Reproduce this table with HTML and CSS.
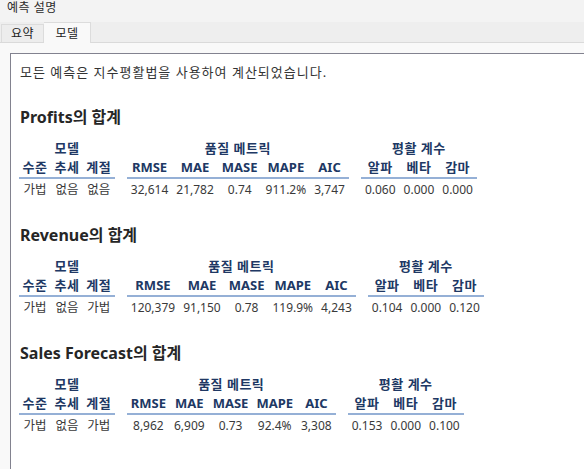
FILE: index.html
```html
<!DOCTYPE html>
<html lang="ko">
<head>
<meta charset="utf-8">
<title>예측 설명</title>
<link rel="stylesheet" href="styles.css">
</head>
<body>
<div class="title">예측 설명</div>
<div class="tabs">
  <div class="tab">요약</div>
  <div class="tab active">모델</div>
</div>
<div class="panel">
  <div class="content">
    <p class="intro">모든 예측은 지수평활법을 사용하여 계산되었습니다.</p>

    <section class="summary">
      <h2>Profits의 합계</h2>
      <div class="groups">
        <table class="grp model">
          <thead>
            <tr><th colspan="3" class="gh">모델</th></tr>
            <tr class="ch"><th>수준</th><th>추세</th><th>계절</th></tr>
          </thead>
          <tbody><tr><td>가법</td><td>없음</td><td>없음</td></tr></tbody>
        </table>
        <table class="grp">
          <thead>
            <tr><th colspan="5" class="gh">품질 메트릭</th></tr>
            <tr class="ch"><th>RMSE</th><th>MAE</th><th>MASE</th><th>MAPE</th><th>AIC</th></tr>
          </thead>
          <tbody><tr><td>32,614</td><td>21,782</td><td>0.74</td><td>911.2%</td><td>3,747</td></tr></tbody>
        </table>
        <table class="grp smooth">
          <thead>
            <tr><th colspan="3" class="gh">평활 계수</th></tr>
            <tr class="ch"><th>알파</th><th>베타</th><th>감마</th></tr>
          </thead>
          <tbody><tr><td>0.060</td><td>0.000</td><td>0.000</td></tr></tbody>
        </table>
      </div>
    </section>

    <section class="summary">
      <h2>Revenue의 합계</h2>
      <div class="groups">
        <table class="grp model">
          <thead>
            <tr><th colspan="3" class="gh">모델</th></tr>
            <tr class="ch"><th>수준</th><th>추세</th><th>계절</th></tr>
          </thead>
          <tbody><tr><td>가법</td><td>없음</td><td>가법</td></tr></tbody>
        </table>
        <table class="grp">
          <thead>
            <tr><th colspan="5" class="gh">품질 메트릭</th></tr>
            <tr class="ch"><th>RMSE</th><th>MAE</th><th>MASE</th><th>MAPE</th><th>AIC</th></tr>
          </thead>
          <tbody><tr><td>120,379</td><td>91,150</td><td>0.78</td><td>119.9%</td><td>4,243</td></tr></tbody>
        </table>
        <table class="grp smooth">
          <thead>
            <tr><th colspan="3" class="gh">평활 계수</th></tr>
            <tr class="ch"><th>알파</th><th>베타</th><th>감마</th></tr>
          </thead>
          <tbody><tr><td>0.104</td><td>0.000</td><td>0.120</td></tr></tbody>
        </table>
      </div>
    </section>

    <section class="summary">
      <h2>Sales Forecast의 합계</h2>
      <div class="groups">
        <table class="grp model">
          <thead>
            <tr><th colspan="3" class="gh">모델</th></tr>
            <tr class="ch"><th>수준</th><th>추세</th><th>계절</th></tr>
          </thead>
          <tbody><tr><td>가법</td><td>없음</td><td>가법</td></tr></tbody>
        </table>
        <table class="grp">
          <thead>
            <tr><th colspan="5" class="gh">품질 메트릭</th></tr>
            <tr class="ch"><th>RMSE</th><th>MAE</th><th>MASE</th><th>MAPE</th><th>AIC</th></tr>
          </thead>
          <tbody><tr><td>8,962</td><td>6,909</td><td>0.73</td><td>92.4%</td><td>3,308</td></tr></tbody>
        </table>
        <table class="grp smooth">
          <thead>
            <tr><th colspan="3" class="gh">평활 계수</th></tr>
            <tr class="ch"><th>알파</th><th>베타</th><th>감마</th></tr>
          </thead>
          <tbody><tr><td>0.153</td><td>0.000</td><td>0.100</td></tr></tbody>
        </table>
      </div>
    </section>
  </div>
</div>
</body>
</html>
```

FILE: styles.css
```css
html, body {
  margin: 0;
  padding: 0;
  height: 100%;
  overflow: hidden;
}
body {
  background: #f3f3f3;
  font-family: "Noto Sans", "Noto Sans CJK KR", sans-serif;
  color: #333;
  display: flex;
  flex-direction: column;
}
.title {
  height: 21px;
  padding: 1px 0 0 7px;
  font-size: 12px;
  line-height: 14px;
  color: #2b2b2b;
  letter-spacing: 0.5px;
}
.tabs {
  height: 20px;
  background: #eeeeee;
  border-bottom: 1px solid #dadada;
  display: flex;
  align-items: flex-end;
  padding-left: 1px;
}
.tab {
  height: 17px;
  width: 41px;
  border: 1px solid #dcdcdc;
  border-bottom: none;
  background: #ededed;
  font-size: 12px;
  line-height: 17px;
  text-align: center;
  color: #222;
  letter-spacing: 0.5px;
}
.tab.active {
  height: 20px;
  width: 46px;
  background: #f9f9f9;
  margin-bottom: -1px;
  border-left: none;
  line-height: 21px;
}
.panel {
  flex: 1;
  background: #f9f9f9;
  padding: 10px 0 0 10px;
  display: flex;
}
.content {
  flex: 1;
  background: #fff;
  border-top: 1px solid #82828f;
  border-left: 1px solid #82828f;
  padding: 9px 0 0 9px;
}
.intro {
  margin: 0;
  font-size: 13px;
  line-height: 18px;
  letter-spacing: 1px;
  color: #333;
}
.summary {
  margin-top: 25px;
}
.summary + .summary {
  margin-top: 25px;
}
.summary h2 {
  margin: 0 0 11px 0;
  font-size: 16px;
  line-height: 22px;
  font-weight: 700;
  color: #262626;
}
.groups {
  display: flex;
  gap: 12px;
  margin-left: -1px;
}
.grp {
  border-collapse: collapse;
  font-size: 12px;
}
.grp th, .grp td {
  padding: 0 4px;
  height: 19px;
  line-height: 19px;
  text-align: center;
  white-space: nowrap;
}
.grp.model th, .grp.model td {
  padding: 0 3.5px;
}
.grp th {
  font-weight: 700;
  font-size: 13px;
  color: #203864;
}
.grp .gh,
.grp.model th,
.grp.smooth th {
  letter-spacing: 0.5px;
}
.grp.model td {
  font-size: 12.5px;
}
.grp .ch th {
  border-bottom: 2px solid #95b0d6;
  height: 19px;
}
.grp td {
  color: #3a3a3a;
  height: 20px;
}
```
